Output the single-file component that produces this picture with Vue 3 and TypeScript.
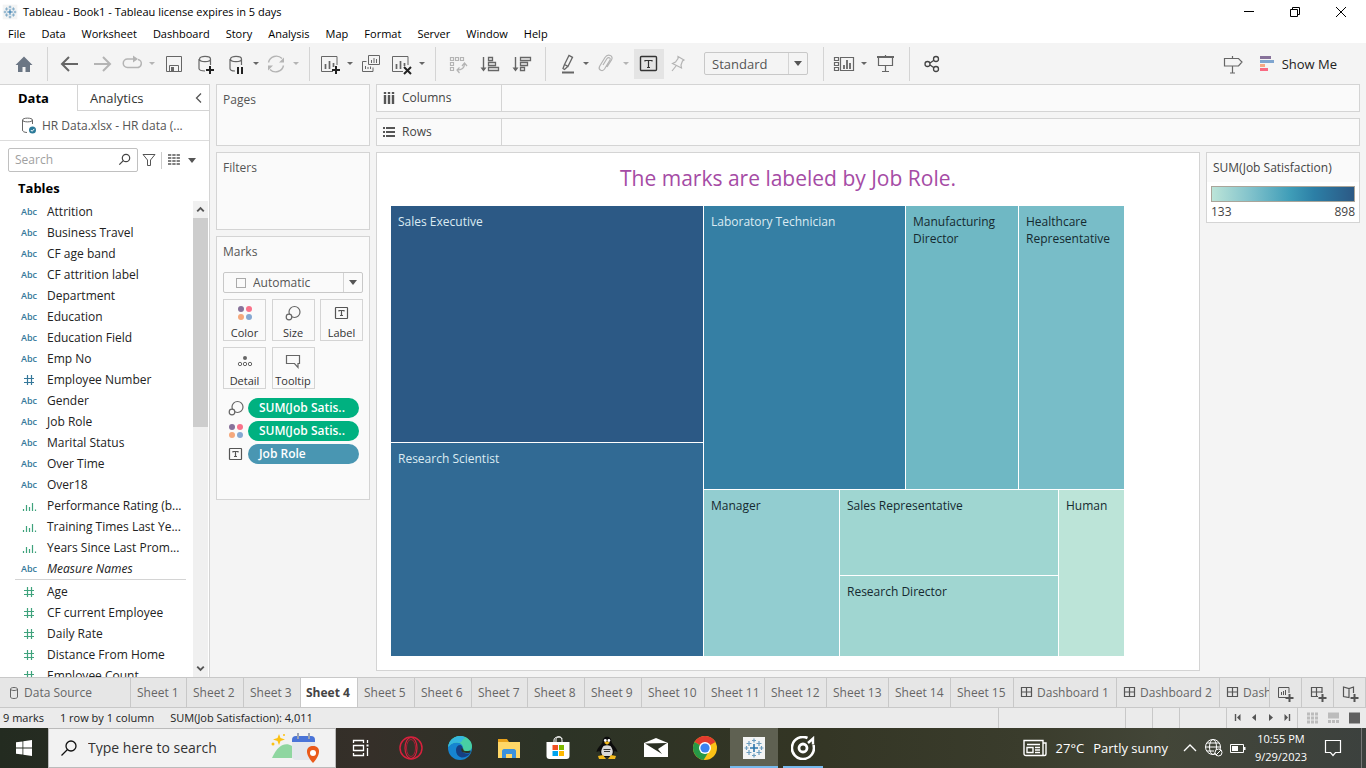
<script setup lang="ts">
import { ref } from 'vue'

type Kind = 'abc' | 'num' | 'bin' | 'measure'
interface Field { name: string; kind: Kind; italic?: boolean }
interface Tool { icon: string; label: string; cls: string }

const icons: Record<string, string> = {
  home: '<path d="M12 4.500 3.500 13H6v7h4.500v-5h3v5H18v-7h2.500z" fill="#6b7684"/>',
  back: '<path d="M20 12H4.500M11 5l-7 7 7 7" stroke="#666" stroke-width="2"/>',
  forward: '<path d="M4 12h15.500M13 5l7 7-7 7" stroke="#b4b4b4" stroke-width="2"/>',
  replay: '<path d="M13 7H7.500a4 4 0 0 0 0 8.500h9a4 4 0 0 0 1.500-8" stroke="#b4b4b4" stroke-width="1.500"/><path d="M13 3.500v7l5-3.500z" fill="#b4b4b4"/>',
  save: '<path d="M4.500 4.500h15v15h-15zM7.500 19v-5.500h9V19" stroke="#666"/><path d="M9 15h3v4H9z" fill="#666"/>',
  dbAdd: '<path d="M16.500 7v6M11 19c-4 0-6-1-6-2.500V7M5.500 7c0-3.500 11-3.500 11 0s-11 3.500-11 0z" stroke="#666" stroke-width="1.200"/><path d="M16 14v8M12 18h8" stroke="#222" stroke-width="2"/>',
  dbPause: '<path d="M17.500 7v6M11 19c-3 0-5-1-5-2.500V7M6.500 7c0-3.500 11-3.500 11 0s-11 3.500-11 0z" stroke="#666" stroke-width="1.200"/><path d="M14 15v7M18 15v7" stroke="#222" stroke-width="2"/>',
  refresh: '<path d="M4.500 10.500a8 8 0 0 1 13.500-4M19.500 13.500a8 8 0 0 1-13.500 4" stroke="#b4b4b4" stroke-width="1.400"/><path d="M20 5.500v5h-5zM4 18.500v-5h5z" fill="#b4b4b4"/>',
  sheetAdd: '<path d="M19 13V4.500H3.500v15H15" stroke="#666"/><path d="M7.500 12v5M11.500 9v8M15.500 11v4" stroke="#666" stroke-width="1.700"/><path d="M18 14v8M14 18h8" stroke="#222" stroke-width="2"/>',
  duplicate: '<path d="M9.500 3.500h11v9h-11z" stroke="#666"/><path d="M7.500 9.500h-4v10h10.500v-4" stroke="#666"/><path d="M12.500 8v3M15 6v5M17.500 7v4M6.500 14v3M9 15v2M11.500 14.500V17" stroke="#666"/>',
  clear: '<path d="M19 13V4.500H3.500v15H14" stroke="#666"/><path d="M7.500 12v5M11.500 9v8M15.500 11v3" stroke="#666" stroke-width="1.700"/><path d="m15 15 7 7m0-7-7 7" stroke="#222" stroke-width="2"/>',
  swap: '<path d="M4.500 5.500h3v3h-3zM9.500 5.500h3v3h-3zM14.500 5.500h3v3h-3zM4.500 10.500h3v3h-3zM4.500 15.500h3v3h-3zM11 18c5 0 7.500-2 7.500-6M16 14l2.500-3 2.500 3M13.500 15.500 11 18l2.500 3" stroke="#b4b4b4" stroke-width="1.200"/>',
  sortAsc: '<path d="M5.500 5v13" stroke="#666" stroke-width="1.400"/><path d="M2.500 15.500h6l-3 4z" fill="#666"/><path d="M10.500 5.500h4v3h-4zM10.500 10.500h7v3h-7zM10.500 15.500h10v3h-10z" stroke="#666" stroke-width="1.300"/>',
  sortDesc: '<path d="M5.500 5v13" stroke="#666" stroke-width="1.400"/><path d="M2.500 15.500h6l-3 4z" fill="#666"/><path d="M10.500 5.500h10v3h-10zM10.500 10.500h7v3h-7zM10.500 15.500h4v3h-4z" stroke="#666" stroke-width="1.300"/>',
  highlight: '<path d="m10.500 12.500 4.500-9 3.500 1.800-4.500 9zM10.500 12.500l-1.500 4 1.500 1 3.500-3.200" stroke="#666" stroke-width="1.300"/><path d="M8 20.500h12" stroke="#666" stroke-width="2"/>',
  clip: '<path d="m9 13 4-6.500c1.500-2 4-.5 3 1.500l-5.500 9c-2 3-6.500 1-5-2.500l5.500-9c3-4.500 9-1.500 6.500 2.500l-4.500 7" stroke="#b4b4b4" stroke-width="1.200"/>',
  label: '<rect x="3.500" y="4.500" width="16" height="14" rx="1" stroke="#333" stroke-width="1.400"/><path d="M8 9.500V8.500h7v1M11.500 8.500v7M10 15.500h3" stroke="#333" stroke-width="1.200"/>',
  pin: '<path d="m12 4.500 6 3.500-1.500 1-1.500 4 .5 3-9-4.500L9.500 10l2.500-3.500zM10 14l-4 5" stroke="#b4b4b4" stroke-width="1.200"/>',
  cards: '<path d="M2.500 5.500h4v3h-4zM2.500 10.500h4v3h-4zM2.500 15.500h4v3h-4zM8.500 5.500h13v13h-13z" stroke="#666" stroke-width="1.200"/><path d="M12 13v4M15 8v9M18 11v6" stroke="#666" stroke-width="1.800"/>',
  present: '<path d="M3 5h17" stroke="#666" stroke-width="2"/><path d="M4.500 5v8.500h14V5M11.500 3v2M11.500 14v5.500M8 19.500h7" stroke="#666" stroke-width="1.200"/>',
  share: '<circle cx="7.500" cy="12" r="2.500"/><circle cx="16" cy="7" r="2.500"/><circle cx="16" cy="17" r="2.500"/><path d="m10 11 4-2.800m-4 4.800 4 2.800"/>',
  guide: '<path d="M3.500 6.500h14l3.500 3.500-3.500 4h-14zM11.500 4v2M11.500 14v7M9 21h5" stroke="#666" stroke-width="1.200"/>',
  showme: '<path d="M2 4h11v3H2z" fill="#87729a"/><path d="M2 8h14v3H2z" fill="#7fa5cf"/><path d="M2 12h5v3H2z" fill="#f5a884"/><path d="M2 16h8v3H2z" fill="#f96a82"/>',
  color: '<circle cx="8" cy="8" r="3" fill="#87729a"/><circle cx="16" cy="8" r="3" fill="#f9728a"/><circle cx="8" cy="16" r="3" fill="#f5a87c"/><circle cx="16" cy="16" r="3" fill="#85a8d2"/>',
  size: '<circle cx="13.500" cy="11" r="5.500" stroke="#666" stroke-width="1.200"/><circle cx="8" cy="16" r="2.800" fill="#fafafa" stroke="#666" stroke-width="1.200"/>',
  text: '<rect x="5.500" y="6.500" width="12" height="11" rx=".5" stroke="#555" stroke-width="1.200"/><path d="M9 10.500V9.500h5v1M11.500 9.500v5M10 14.500h3" stroke="#555" stroke-width="1.200"/>',
  detail: '<circle cx="12" cy="9" r="2" fill="#666"/><circle cx="7" cy="15" r="1.700" stroke="#666"/><circle cx="12" cy="15" r="1.700" stroke="#666"/><circle cx="17" cy="15" r="1.700" stroke="#666"/>',
  tooltip: '<path d="M5.500 6.500h13v8H17v4l-3.500-4h-8z" stroke="#666" stroke-width="1.200"/>',
  db: '<path d="M14.500 6v4M9 18.500c-3-.2-4.500-1-4.500-2.500V6M4.500 6c0-2.500 10-2.500 10 0s-10 2.500-10 0z" stroke="#666"/><circle cx="14.500" cy="16" r="3.500" fill="#2b7a99" stroke="none"/><path d="m12.800 16 1.300 1.300 2.200-2.400" stroke="#fff"/>',
  cyl: '<path d="M8.500 8v8c0 2 7 2 7 0V8c0-2-7-2-7 0s7 2 7 0" stroke="#666"/>',
  search: '<circle cx="13" cy="10" r="3.700" stroke="#444" stroke-width="1.200"/><path d="m10.300 12.700-4 4" stroke="#444" stroke-width="1.200"/>',
  filter: '<path d="M6 6.500h12l-4.500 5.500v5.500h-3V12z" stroke="#555"/>',
  list: '<path d="M6 7h12M6 10h12M6 13h12M6 16h12" stroke="#555" stroke-width="1.400" stroke-dasharray="3.300 1"/>',
  columns: '<path d="M8 6v2M12 6v2M16 6v2M8 9v9M12 9v9M16 9v9" stroke="#555" stroke-width="2.400"/>',
  rows: '<path d="M6 8h2M6 12h2M6 16h2M9 8h9M9 12h9M9 16h9" stroke="#555" stroke-width="2"/>',
  dash: '<path d="M7.500 6.500h10v9h-10zM12.500 6.500v9M7.500 11h10" stroke="#555" stroke-width="1.200"/>',
  newSheet: '<path d="M16 12V6.500H5.500v10H13M8.500 11V14M10.500 10V14M12.500 9V14" stroke="#555"/><path d="M16.500 13v8M12.500 17h8" stroke="#555" stroke-width="2"/>',
  newDash: '<path d="M17 12V6.500H6.500v9H13M11.500 6.500v9M6.500 11H17" stroke="#555" stroke-width="1.200"/><path d="M17.500 13v8M13.500 17h8" stroke="#555" stroke-width="2"/>',
  newStory: '<path d="M16.500 12V6L12 7.500 6.500 6v9.500L12 16.500V7.500" stroke="#555" stroke-width="1.200"/><path d="M17.500 13v8M13.500 17h8" stroke="#555" stroke-width="2"/>',
  first: '<path d="M9.500 8v7" stroke="#555" stroke-width="1.400"/><path d="M14.500 8v7L11 11.500z" fill="#555"/>',
  prev: '<path d="M14 8v7l-4-3.500z" fill="#555"/>',
  next: '<path d="M11 8v7l4-3.500z" fill="#555"/>',
  last: '<path d="M15.500 8v7" stroke="#555" stroke-width="1.400"/><path d="M10.500 8v7l3.500-3.500z" fill="#555"/>',
  gridView: '<path d="M7 8h11M7 12h11M7 16h11" stroke="#bcbcbc" stroke-width="3" stroke-dasharray="3 1"/>',
  filmView: '<path d="M7 6.500h11v6H7z" fill="#bcbcbc"/><path d="M7 15.500h11" stroke="#bcbcbc" stroke-width="3" stroke-dasharray="3 1"/>',
  sheetView: '<path d="M7 6.500h11v11H7z" fill="#606060"/>',
}

const appIcons: Record<string, string> = {
  taskview: '<path d="M5.500 7V4.500h10V7M5.500 17v2.500h10V17M5.500 9.500h10v5h-10zM19.500 4v3M19.500 12v8" stroke="#fff" stroke-width="1.300"/><path d="M18.500 8.500h2v2h-2z" fill="#fff"/>',
  opera: '<circle cx="12" cy="12" r="11" stroke="#d8213d" stroke-width="1.500"/><ellipse cx="12" cy="12" rx="6" ry="10.500" stroke="#d8213d" stroke-width="1.200"/><ellipse cx="12" cy="12" rx="4.500" ry="8.500" stroke="#a81f35"/>',
  edge: '<circle cx="12" cy="12" r="12" fill="#1684d0"/><path d="M.5 9C2.500 2 8 0 12 0c7 0 12 5 12 10 0 4-3 6.500-6.500 6.500-3 0-4-1.500-3-3C16 9.500 12.500 6.500 9 6.500 5 6.500 2 8 .5 11z" fill="#48cfa3"/><path d="M.5 9C2.500 3.500 7 .5 12 0c3-.1 4.500 1 5.500 2C13 3 15 8 9 6.500 5 6.500 2 8 .5 11z" fill="#35b6df"/><path d="M8 14c0-3 1.500-5 4.500-5 2 1 3 3 1.500 5 0 3 4 4.500 8.500 3-3 4-7 5-9 4.500C10 20.500 8 18 8 14z" fill="#153f83"/><path d="M14.500 12.500c-1 3 2 4.500 8 3" stroke="#2c3326" stroke-width="2"/>',
  explorer: '<path d="M1 3h9l2 3h11v16H1z" fill="#e9a21b"/><path d="M1 6h22v16H1z" fill="#ffd767"/><path d="M5 22v-7c0-1 1-2 2-2h10c1 0 2 1 2 2v7h-4v-4H9v4z" fill="#3b91dc"/>',
  store: '<path d="M8 6V4c0-4 8-4 8 0v2M10 6V3c0-3 6-3 6 0" stroke="#fff"/><path d="M.500 6h23v14q0 3-3 3h-17q-3 0-3-3z" fill="#fff"/><path d="M6.500 9H12v5H6.500z" fill="#f25022"/><path d="M13 9h5v5h-5z" fill="#7fba00"/><path d="M6.500 15H12v5H6.500z" fill="#00a4ef"/><path d="M13 15h5v5h-5z" fill="#ffb900"/>',
  penguin: '<path d="M7.500 6c0-7 9-7 9 0 1 3 5 5 6 10l-3-1-2 6h-11l-2-6-3 1C2.500 11 6.500 9 7.500 6z" fill="#0c0c0c"/><path d="M8.500 10c2-1 5-1 7 0 3 4 3 8 0 10h-7c-3-2-3-6 0-10z" fill="#d8d8d8"/><circle cx="10.300" cy="4.500" r="1.400" fill="#fff"/><circle cx="13.900" cy="4.500" r="1.400" fill="#fff"/><path d="m9 6.800 3-1.500 3 1.500-3 2zM3 20l5-1 3 4H4zM21 20l-5-1-3 4h7z" fill="#f2b91d"/><path d="M8.500 13.500h7M9 15.500h6" stroke="#333"/>',
  mail: '<path d="M0 7 12 2l12 5v14H0z" fill="#fff"/><path d="m1 7.500 22-.5L14 13l4 5z" fill="#2b3024"/>',
  chrome: '<circle cx="12" cy="12" r="12" fill="#fbc116"/><path d="M12 12 1.600 6A12 12 0 0 1 22.400 6z" fill="#e33b2e"/><path d="M12 12 1.600 6a12 12 0 0 0 9 17.900l4.900-8z" fill="#279847"/><circle cx="12" cy="12" r="6" fill="#fff"/><circle cx="12" cy="12" r="4.600" fill="#3b82f0"/>',
  tableau: '<path d="M1 1h22v22H1z" fill="#f3f4f4"/><path d="M12 8v8M8 12h8" stroke="#2c76ac" stroke-width="1.600"/><path d="M12 2.500v4M10 4.500h4M12 17.500v4M10 19.500h4M2.500 12h4M4.500 10v4M17.500 12h4M19.500 10v4M7 5v5M4.500 7.500h5M17 5v5M14.500 7.500h5M7 14v5M4.500 16.500h5M17 14v5M14.500 16.500h5" stroke="#6b9dbf" stroke-width="1.200"/>',
  groove: '<path d="M16.500 2A11 11 0 1 0 22.500 9" stroke="#fff" stroke-width="2.600"/><path d="m17 7 5-4.500v6" stroke="#fff" stroke-width="2.400"/><circle cx="12" cy="12" r="4" stroke="#fff" stroke-width="2.800"/>',
  news: '<path d="M1 4.500h19v15H3q-2 0-2-2zM20 7h3v11q0 1.500-1.500 1.500H20M4 8.500h13M4 11.500h6v5H4zM12 11.500h5M12 14h5M12 16.500h5" stroke="#fff" stroke-width="1.400"/>',
  globe: '<circle cx="11" cy="11" r="7.500" stroke="#fff"/><ellipse cx="11" cy="11" rx="3.500" ry="7.500" stroke="#fff"/><path d="M3.500 11h15M5 7h12M5 15h7" stroke="#fff"/><circle cx="16.500" cy="16.500" r="3.500" fill="#3c4136" stroke="#fff"/><path d="m14 19 5-5" stroke="#fff"/>',
  battery: '<path d="M4.500 8.500h13v8h-13z" stroke="#fff"/><path d="M6 10h6v5H6zM18 11h1.500v3H18z" fill="#fff"/>',
  chevron: '<path d="m6 15 6-6 6 6" stroke="#fff" stroke-width="1.300"/>',
  notify: '<path d="M4.500 4.500h15v12h-5l-2.500 3-2.500-3h-5z" stroke="#fff" stroke-width="1.200"/>',
}

const menus = ['File', 'Data', 'Worksheet', 'Dashboard', 'Story', 'Analysis', 'Map', 'Format', 'Server', 'Window', 'Help']

const caret = (label: string, dim = false): Tool => ({ icon: '', label, cls: dim ? 'caret dim' : 'caret' })
const groups: Tool[][] = [
  [
    { icon: 'back', label: 'Undo', cls: 'wide' },
    { icon: 'forward', label: 'Redo', cls: 'wide' },
    { icon: 'replay', label: 'Replay animation', cls: 'slim' }, caret('Replay options', true),
    { icon: 'save', label: 'Save', cls: 'wide' },
    { icon: 'dbAdd', label: 'New data source', cls: 'wide' },
    { icon: 'dbPause', label: 'Pause auto updates', cls: 'slim' }, caret('Update options'),
    { icon: 'refresh', label: 'Run update', cls: 'slim' }, caret('Run options', true),
  ],
  [
    { icon: 'sheetAdd', label: 'New worksheet', cls: 'slim' }, caret('New options'),
    { icon: 'duplicate', label: 'Duplicate', cls: '' },
    { icon: 'clear', label: 'Clear sheet', cls: '' }, caret('Clear options'),
  ],
  [
    { icon: 'swap', label: 'Swap rows and columns', cls: 'wide' },
    { icon: 'sortAsc', label: 'Sort ascending', cls: 'wide' },
    { icon: 'sortDesc', label: 'Sort descending', cls: 'wide' },
  ],
  [
    { icon: 'highlight', label: 'Highlight', cls: 'slim' }, caret('Highlight options'),
    { icon: 'clip', label: 'Group members', cls: 'slim' }, caret('Group options', true),
    { icon: 'label', label: 'Show mark labels', cls: 'on' },
    { icon: 'pin', label: 'Fix axes', cls: 'slim' },
  ],
]

const dimensions: Field[] = [
  ...['Attrition', 'Business Travel', 'CF age band', 'CF attrition label', 'Department', 'Education', 'Education Field', 'Emp No'].map((name): Field => ({ name, kind: 'abc' })),
  { name: 'Employee Number', kind: 'num' },
  ...['Gender', 'Job Role', 'Marital Status', 'Over Time', 'Over18'].map((name): Field => ({ name, kind: 'abc' })),
  { name: 'Performance Rating (b...', kind: 'bin' },
  { name: 'Training Times Last Ye...', kind: 'bin' },
  { name: 'Years Since Last Prom...', kind: 'bin' },
  { name: 'Measure Names', kind: 'abc', italic: true },
]
const measures: Field[] = ['Age', 'CF current Employee', 'Daily Rate', 'Distance From Home', 'Employee Count'].map((name) => ({ name, kind: 'measure' }))

const markButtons = [
  { icon: 'color', name: 'Color' },
  { icon: 'size', name: 'Size' },
  { icon: 'text', name: 'Label' },
  { icon: 'detail', name: 'Detail' },
  { icon: 'tooltip', name: 'Tooltip' },
]
const pills = [
  { icon: 'size', name: 'SUM(Job Satis..', tone: 'green' },
  { icon: 'color', name: 'SUM(Job Satis..', tone: 'green' },
  { icon: 'text', name: 'Job Role', tone: 'blue' },
]

const sheetWidths = ['narrow', '', '', '', '', '', 'narrow', '', '', 'longest', 'mid', 'long', 'long', 'long', 'longest']
const sheets = sheetWidths.map((cls, i) => ({ name: `Sheet ${i + 1}`, cls }))
const dashboards = ['Dashboard 1', 'Dashboard 2', 'Dash']
const active = ref('Sheet 4')

const apps = ['taskview', 'opera', 'edge', 'explorer', 'store', 'penguin', 'mail', 'chrome', 'tableau', 'groove']
const query = ref('')
const fit = ref('Standard')
const markType = ref('Automatic')
</script>

<template>
  <div class="app">
    <header class="titlebar">
      <svg class="logo" viewBox="0 0 24 24" fill="none" v-html="appIcons.tableau"></svg>
      <span class="title">Tableau - Book1 - Tableau license expires in 5 days</span>
      <button class="win" aria-label="Minimize"><svg viewBox="0 0 12 12"><path d="M1 5.500h10" /></svg></button>
      <button class="win" aria-label="Restore"><svg viewBox="0 0 12 12"><path d="M1.500 3.500h7v7h-7zM3.500 3V1.500h7v7H9" /></svg></button>
      <button class="win" aria-label="Close"><svg viewBox="0 0 12 12"><path d="m1 1 10 10M11 1 1 11" /></svg></button>
    </header>
    <nav class="menubar">
      <button v-for="m in menus" :key="m">{{ m }}</button>
    </nav>

    <div class="toolbar" role="toolbar" aria-label="Main">
      <button class="tool home" aria-label="Home"><svg viewBox="0 0 24 24" fill="none" v-html="icons.home"></svg></button>
      <template v-for="(g, gi) in groups" :key="gi">
        <i class="sep"></i>
        <button v-for="t in g" :key="t.label" class="tool" :class="t.cls" :aria-label="t.label">
          <svg v-if="t.icon" viewBox="0 0 24 24" fill="none" v-html="icons[t.icon]"></svg>
        </button>
      </template>
      <div class="combo fit">
        <select v-model="fit" aria-label="Fit"><option>Standard</option><option>Entire View</option></select>
        <span class="arrow"></span>
      </div>
      <i class="sep"></i>
      <button class="tool slim" aria-label="Show or hide cards"><svg viewBox="0 0 24 24" fill="none" v-html="icons.cards"></svg></button>
      <button class="tool caret" aria-label="Card options"></button>
      <button class="tool wide" aria-label="Presentation mode"><svg viewBox="0 0 24 24" fill="none" v-html="icons.present"></svg></button>
      <i class="sep"></i>
      <button class="tool wide" aria-label="Share"><svg viewBox="0 0 24 24" fill="none" stroke="#444" stroke-width="1.3" v-html="icons.share"></svg></button>
      <span class="spacer"></span>
      <button class="tool wide" aria-label="Guide"><svg viewBox="0 0 24 24" fill="none" v-html="icons.guide"></svg></button>
      <button class="showme"><svg viewBox="0 0 24 24" fill="none" v-html="icons.showme"></svg>Show Me</button>
    </div>

    <main class="work">
      <aside class="data">
        <div class="tabs">
          <button class="on">Data</button>
          <button class="off">Analytics<svg viewBox="0 0 8 12" fill="none"><path d="M6 1.500 1.500 6 6 10.500" stroke="#555" stroke-width="1.300" /></svg></button>
        </div>
        <div class="source"><svg viewBox="0 0 24 24" fill="none" v-html="icons.db"></svg>HR Data.xlsx - HR data (...</div>
        <div class="find">
          <label class="box">
            <input v-model="query" type="text" placeholder="Search" aria-label="Search fields" />
            <svg viewBox="0 0 24 24" fill="none" v-html="icons.search"></svg>
          </label>
          <button aria-label="Filter fields"><svg viewBox="0 0 24 24" fill="none" v-html="icons.filter"></svg></button>
          <i></i>
          <button aria-label="View as list"><svg viewBox="0 0 24 24" fill="none" v-html="icons.list"></svg></button>
          <span class="arrow"></span>
        </div>
        <h2>Tables</h2>
        <div class="fields">
          <div class="scroll">
            <ul v-for="(set, si) in [dimensions, measures]" :key="si">
              <li v-for="f in set" :key="f.name">
                <b v-if="f.kind === 'abc'" class="abc">Abc</b>
                <svg v-else-if="f.kind === 'bin'" class="glyph green" viewBox="0 0 16 12"><path d="M2.500 9v2M5.500 5v6M8.500 7v4M11.500 3v8M14.500 9.500V11" /></svg>
                <svg v-else class="glyph" :class="{ green: f.kind === 'measure' }" viewBox="0 0 16 12"><path d="M6.500 1v10M10.500 1v10M3 4.500h10M3 8.500h10" /></svg>
                <em v-if="f.italic">{{ f.name }}</em>
                <span v-else>{{ f.name }}</span>
              </li>
            </ul>
          </div>
          <div class="bar">
            <svg viewBox="0 0 16 16"><path d="m4.500 10 3.500-3.500 3.500 3.500" /></svg>
            <span class="thumb"></span>
            <svg viewBox="0 0 16 16"><path d="m4.500 6 3.500 3.500L11.500 6" /></svg>
          </div>
        </div>
      </aside>

      <section class="cards">
        <div class="card pages">Pages</div>
        <div class="card filters">Filters</div>
        <div class="card marks">
          Marks
          <div class="combo type">
            <i class="square"></i>
            <select v-model="markType" aria-label="Mark type"><option>Automatic</option><option>Square</option></select>
            <span class="arrow"></span>
          </div>
          <div class="grid">
            <button v-for="b in markButtons" :key="b.name"><svg viewBox="0 0 24 24" fill="none" v-html="icons[b.icon]"></svg>{{ b.name }}</button>
          </div>
          <div v-for="(p, i) in pills" :key="i" class="pillrow">
            <svg viewBox="0 0 24 24" fill="none" v-html="icons[p.icon]"></svg>
            <button class="pill" :class="p.tone">{{ p.name }}</button>
          </div>
        </div>
      </section>

      <section class="canvas">
        <div class="shelf"><div><svg viewBox="0 0 24 24" fill="none" v-html="icons.columns"></svg>Columns</div></div>
        <div class="shelf"><div><svg viewBox="0 0 24 24" fill="none" v-html="icons.rows"></svg>Rows</div></div>
        <div class="viewrow">
          <article class="view">
            <h1>The marks are labeled by Job Role.</h1>
            <div class="treemap">
              <div class="left">
                <div class="mark light c1">Sales Executive</div>
                <div class="mark light c2">Research Scientist</div>
              </div>
              <div class="right">
                <div class="upper">
                  <div class="mark light c3">Laboratory Technician</div>
                  <div class="mark c4">Manufacturing Director</div>
                  <div class="mark c5">Healthcare Representative</div>
                </div>
                <div class="lower">
                  <div class="mark c6">Manager</div>
                  <div class="pair">
                    <div class="mark c7">Sales Representative</div>
                    <div class="mark c8">Research Director</div>
                  </div>
                  <div class="mark c9">Human</div>
                </div>
              </div>
            </div>
          </article>
          <div class="legend">
            <p>SUM(Job Satisfaction)</p>
            <div class="ramp"></div>
            <div class="ends"><span>133</span><span>898</span></div>
          </div>
        </div>
      </section>
    </main>

    <nav class="sheets">
      <button class="tab ds"><svg viewBox="0 0 24 24" fill="none" v-html="icons.cyl"></svg>Data Source</button>
      <button v-for="s in sheets" :key="s.name" class="tab" :class="[s.cls, { active: s.name === active }]" @click="active = s.name">{{ s.name }}</button>
      <button v-for="(d, i) in dashboards" :key="d" class="tab dashtab" :class="{ cut: i === 2 }"><svg viewBox="0 0 24 24" fill="none" v-html="icons.dash"></svg>{{ d }}</button>
      <button v-for="n in ['newSheet', 'newDash', 'newStory']" :key="n" class="tab add" :aria-label="n"><svg viewBox="0 0 24 24" fill="none" v-html="icons[n]"></svg></button>
    </nav>

    <footer class="status">
      <span>9 marks</span><span>1 row by 1 column</span><span>SUM(Job Satisfaction): 4,011</span>
      <span class="spacer"></span>
      <i class="cell"></i><i class="cell"></i><i class="cell"></i><i class="cell last"></i>
      <div class="pager"><button v-for="n in ['first', 'prev', 'next', 'last']" :key="n" :aria-label="n"><svg viewBox="0 0 24 24" fill="none" v-html="icons[n]"></svg></button></div>
      <div class="views"><button v-for="n in ['gridView', 'filmView', 'sheetView']" :key="n" :aria-label="n"><svg viewBox="0 0 24 24" fill="none" v-html="icons[n]"></svg></button></div>
    </footer>

    <div class="taskbar">
      <button class="start" aria-label="Start"><svg viewBox="0 0 16 16"><path d="M0 2.300 6.500 1.400v6.200H0zM7.300 1.300 16 0v7.600H7.300zM0 8.400h6.500v6.200L0 13.700zM7.300 8.400H16V16l-8.700-1.300z" fill="#fff" /></svg></button>
      <label class="wsearch">
        <svg class="glass" viewBox="0 0 18 18" fill="none"><circle cx="11" cy="7" r="5" stroke="#111" stroke-width="1.300" /><path d="m7.500 10.500-6 6" stroke="#111" stroke-width="1.300" /></svg>
        <input type="text" placeholder="Type here to search" aria-label="Type here to search" />
        <svg class="scene" viewBox="0 0 52 32" fill="none">
          <path d="M2 26C8 12 16 10 22 14v12z" fill="#8fd6a0" />
          <rect x="22" y="4" width="23" height="24" rx="4" fill="#e4e7ec" />
          <path d="M22 10V8q0-4 4-4h15q4 0 4 4v2z" fill="#4a74d8" />
          <path d="M28 1v6M39 1v6" stroke="#9aa3b5" stroke-width="2" />
          <path d="m9 2 1.500 4L15 7.500 10.500 9 9 13 7.500 9 3 7.500 7.500 6z" fill="#fcc112" /><circle cx="3" cy="12" r="1.500" fill="#fcc112" /><circle cx="14" cy="3" r="1" fill="#fcc112" />
          <path d="M43 31c-9-10-7-17 0-17s9 7 0 17z" fill="#ea5a1a" /><circle cx="43" cy="21" r="3" fill="#fff" />
        </svg>
      </label>
      <button v-for="a in apps" :key="a" class="app-btn" :class="a" :aria-label="a"><svg viewBox="0 0 24 24" fill="none" v-html="appIcons[a]"></svg></button>
      <span class="spacer"></span>
      <button class="weather"><svg viewBox="0 0 24 24" fill="none" v-html="appIcons.news"></svg><span>27°C</span><span>Partly sunny</span></button>
      <button v-for="n in ['chevron', 'globe', 'battery']" :key="n" class="tray" :aria-label="n"><svg viewBox="0 0 24 24" fill="none" v-html="appIcons[n]"></svg></button>
      <div class="clock"><span>10:55 PM</span><span>9/29/2023</span></div>
      <button class="notify" aria-label="Notifications"><svg viewBox="0 0 24 24" fill="none" v-html="appIcons.notify"></svg></button>
      <i class="edge-line"></i>
    </div>
  </div>
</template>

<style>
body { margin: 0; overflow: hidden; }
</style>

<style scoped>
* { box-sizing: border-box; }
.app { height: 100vh; display: flex; flex-direction: column; background: #f4f4f4; color: #333; font: 13px/16px "Open Sans", "Noto Sans", sans-serif; overflow: hidden; }
button { font: inherit; color: inherit; background: none; border: 0; padding: 0; margin: 0; white-space: nowrap; }
svg { width: 24px; height: 24px; flex: none; display: block; }
.spacer { flex: 1; }
.arrow { width: 0; height: 0; border: 4px solid transparent; border-top: 5px solid #555; border-bottom: 0; flex: none; }

.titlebar { height: 24px; background: #fff; display: flex; align-items: center; color: #000; font-size: 11px; flex: none; padding: 0 2px; }
.logo { width: 16px; height: 16px; margin-right: 5px; }
.title { flex: 1; }
.win { width: 46px; height: 22px; display: flex; justify-content: center; align-items: center; }
.win svg { width: 12px; height: 12px; fill: none; stroke: #000; }
.menubar { height: 19px; background: #fff; display: flex; gap: 16px; padding: 0 8px; color: #000; font-size: 11px; flex: none; line-height: 20px; }

.toolbar { height: 41px; flex: none; display: flex; align-items: center; padding-right: 29px; }
.tool { width: 30px; height: 30px; display: flex; align-items: center; justify-content: center; flex: none; }
.tool.home { width: 47px; }
.tool.home + .sep { margin-left: 0; }
.tool.slim { width: 28px; }
.tool.wide { width: 32px; }
.tool.on { background: #e4e4e4; margin-left: 2px; }
.tool.caret { width: 12px; }
.tool.caret::after { content: ""; border: 3px solid transparent; border-top: 3px solid #666; border-bottom: 0; }
.tool.dim::after { border-top-color: #b4b4b4; }
.sep { width: 1px; height: 34px; background: #d4d4d4; margin: 0 6px 0 7px; flex: none; }
.combo { display: flex; align-items: center; border: 1px solid #c8c8c8; border-radius: 2px; }
.combo select { appearance: none; border: 0; border-right: 1px solid #d4d4d4; background: none; font: inherit; color: #555; flex: 1; min-width: 0; height: 100%; padding: 0 0 0 7px; outline: 0; }
.combo .arrow { margin: 0 5px; }
.fit { width: 104px; height: 23px; margin: 0 8px 0 12px; }
.showme { display: flex; align-items: center; gap: 0; margin-left: 9px; color: #222; }

.work { flex: 1; min-height: 0; display: flex; gap: 6px; padding-right: 6px; }
.data { width: 210px; flex: none; background: #fff; border: 1px solid #d4d4d4; border-width: 1px 1px 0 0; display: flex; flex-direction: column; }
.tabs { display: flex; height: 26px; flex: none; }
.tabs .on { width: 77px; text-align: left; padding-left: 18px; font-weight: 700; color: #000; }
.tabs .off { flex: 1; border: 1px solid #d4d4d4; border-width: 0 0 1px 1px; display: flex; justify-content: space-between; align-items: center; padding: 0 6px 0 12px; color: #333; }
.tabs svg { width: 8px; height: 12px; }
.source { height: 30px; flex: none; border-bottom: 1px solid #dcdcdc; display: flex; align-items: center; padding-left: 18px; color: #555; font-size: 12px; }
.find { display: flex; align-items: center; padding: 7px 8px 0; flex: none; }
.box { display: flex; align-items: center; width: 130px; height: 24px; border: 1px solid #c0c0c0; border-radius: 2px; margin-right: -1px; background: #fff; }
.box input { flex: 1; min-width: 0; border: 0; outline: 0; padding: 0 0 0 6px; font: inherit; font-size: 12px; background: none; }
.box input::placeholder { color: #a0a0a0; opacity: 1; }
.find i { width: 1px; height: 17px; background: #ccc; }
.find .arrow { margin-left: 2px; }
h2 { margin: 8px 0 5px 18px; font-size: 13px; line-height: 16px; color: #000; }
.fields { flex: 1; min-height: 0; display: flex; }
.scroll { flex: 1; min-width: 0; overflow: hidden; }
ul { list-style: none; margin: 0 7px 0 15px; padding: 0; }
ul + ul { border-top: 1px solid #d4d4d4; padding-top: 1px; }
li { display: flex; align-items: center; height: 21px; white-space: nowrap; font-size: 12px; color: #222; }
.abc { width: 32px; padding-left: 6px; font-size: 9px; font-weight: 600; color: #35789a; flex: none; }
.glyph { width: 16px; height: 12px; margin: 0 10px 0 6px; stroke: #35789a; fill: none; stroke-width: 1.200; }
.glyph.green { stroke: #3fa27c; }
.bar { width: 15px; background: #f0f0f0; flex: none; display: flex; flex-direction: column; margin-right: 1px; }
.bar svg { width: 15px; height: 17px; fill: none; stroke: #555; stroke-width: 2; }
.thumb { background: #cdcdcd; flex: none; height: 44%; }
.bar svg:last-child { margin-top: auto; }

.cards { width: 154px; flex: none; display: flex; flex-direction: column; gap: 6px; font-size: 12px; color: #555; }
.card { background: #fafafa; border: 1px solid #d4d4d4; padding: 7px 6px; }
.pages { height: 62px; }
.filters { height: 78px; }
.marks { height: 264px; }
.type { height: 21px; margin: 12px 0 6px; }
.type select { padding-left: 7px; }
.square { width: 10px; height: 10px; border: 1px solid #aaa; margin-left: 12px; }
.grid { display: grid; grid-template-columns: repeat(3, 43px); justify-content: space-between; row-gap: 6px; margin-bottom: 9px; }
.grid button { height: 42px; border: 1px solid #d4d4d4; display: flex; flex-direction: column; align-items: center; color: #333; padding-top: 1px; font-size: 11px; }
.pillrow { display: flex; align-items: center; height: 20px; margin-bottom: 3px; padding: 0 4px 0 1px; }
.pill { flex: 1; height: 20px; border-radius: 10px; color: #fff; text-align: left; padding-left: 11px; font-weight: 600; }
.green.pill { background: #00b180; }
.blue.pill { background: #4996b2; }

.canvas { flex: 1; min-width: 0; display: flex; flex-direction: column; gap: 6px; padding-bottom: 6px; }
.shelf { height: 28px; flex: none; border: 1px solid #d4d4d4; background: #fafafa; display: flex; font-size: 12px; color: #444; }
.shelf div { width: 125px; border-right: 1px solid #d4d4d4; display: flex; align-items: center; gap: 1px; }
.viewrow { flex: 1; min-height: 0; display: flex; align-items: flex-start; gap: 6px; }
.view { flex: 1; min-width: 0; height: 100%; background: #fff; border: 1px solid #d4d4d4; display: flex; flex-direction: column; padding: 9px 75px 14px 14px; }
h1 { margin: 0 -61px 12px 0; text-align: center; font-weight: 400; font-size: 21px; line-height: 32px; color: #a54ba5; }
.treemap { flex: 1; min-height: 0; display: grid; grid-template-columns: 312fr 420fr; gap: 1px; }
.left { display: grid; grid-template-rows: 236fr 213fr; gap: 1px; }
.right { display: grid; grid-template-rows: 283fr 166fr; gap: 1px; min-width: 0; }
.upper { display: grid; grid-template-columns: 201fr 112fr 105fr; gap: 1px; }
.lower { display: grid; grid-template-columns: 135fr 218fr 65fr; gap: 1px; }
.pair { display: grid; grid-template-rows: 85fr 80fr; gap: 1px; }
.mark { padding: 7px 0 0 7px; font-size: 12px; line-height: 17px; color: #152a30; min-width: 0; overflow: hidden; }
.mark.light { color: #dcebf2; }
.c1 { background: #2c5985; }
.c2 { background: #316a94; }
.c3 { background: #357fa4; }
.c4 { background: #6fb8c4; }
.c5 { background: #78bdc8; }
.c6 { background: #92cdd0; }
.c7 { background: #9fd6d1; }
.c8 { background: #a0d6d1; }
.c9 { background: #bce4d8; }
.legend { width: 154px; flex: none; border: 1px solid #d4d4d4; background: #fff; font-size: 12px; color: #444; padding-bottom: 2px; }
.legend p { margin: 0; height: 29px; padding: 7px 6px 0; background: #fafafa; }
.ramp { height: 16px; margin: 4px 4px 2px; border: 1px solid #aaa59a; background: linear-gradient(90deg, #bce4d8, #7fc1cb 28%, #3f9db8 55%, #2c7fa6 72%, #2c5985); }
.ends { display: flex; justify-content: space-between; padding: 0 4px; }

.sheets { height: 31px; flex: none; display: flex; border: 1px solid #c8c8c8; border-width: 1px 0; background: #e6e6e6; font-size: 12px; color: #666; }
.tab { width: 57px; flex: none; border-right: 1px solid #c8c8c8; display: flex; align-items: center; padding-left: 6px; overflow: hidden; }
.tab.narrow { width: 56px; }
.tab.mid { width: 60px; }
.tab.long { width: 62px; }
.tab.longest { width: 63px; }
.tab.active { background: #fff; font-weight: 700; color: #444; padding-left: 5px; }
.tab.ds { width: 131px; padding-left: 2px; }
.tab.ds svg { margin-right: -2px; }
.tab.dashtab { width: 103px; padding-left: 0; }
.tab.dashtab svg { margin-right: -1px; }
.tab.cut { flex: 1; min-width: 0; }
.tab.add { width: 32px; padding-left: 3px; }

.status { height: 20px; flex: none; display: flex; align-items: center; background: #ebebeb; font-size: 11px; color: #222; padding-left: 3px; }
.status > span:not(.spacer) { margin-right: 16px; }
.cell { width: 27px; height: 20px; border-left: 1px solid #c8c8c8; }
.cell:first-of-type { width: 127px; }
.cell.last { width: 47px; }
.pager { display: flex; height: 20px; align-items: center; border: 1px solid #c8c8c8; border-width: 0 1px; width: 72px; justify-content: center; }
.pager button { width: 16px; display: flex; justify-content: center; }
.views { display: flex; padding: 0 2px 0 3px; }
.views button { width: 21px; display: flex; justify-content: center; }

.taskbar { height: 40px; flex: none; display: flex; align-items: stretch; color: #fff; font-size: 13px; background: linear-gradient(90deg, #232b20, #352f29 27%, #2c3326 40%, #333524 58%, #3a3c2c 75%, #434638 85%, #3c413e); }
.start { width: 48px; display: flex; align-items: center; justify-content: center; }
.start svg { width: 16px; height: 16px; }
.wsearch { width: 288px; background: #f2f2f2; border: 1px solid #bbb; display: flex; align-items: center; padding-left: 11px; }
.glass { width: 18px; height: 18px; margin-right: 10px; }
.wsearch input { border: 0; outline: 0; background: none; font: inherit; font-size: 14px; flex: 1; min-width: 0; padding: 0; }
.wsearch input::placeholder { color: #333; opacity: 1; }
.scene { width: 52px; height: 32px; margin-right: 13px; }
.app-btn { width: 48px; margin-right: 1px; display: flex; align-items: center; justify-content: center; border-bottom: 2px solid transparent; border-top: 2px solid transparent; }
.app-btn.taskview { margin-right: 3px; }
.app-btn.tableau { background: #5f6152; border-bottom-color: #76b9ed; }
.app-btn.groove { border-bottom-color: #76b9ed; width: 40px; margin-left: 4px; }
.weather { display: flex; align-items: center; gap: 9px; margin-right: 10px; }
.tray { width: 24px; display: flex; align-items: center; justify-content: center; }
.clock { width: 62px; display: flex; flex-direction: column; align-items: center; justify-content: center; font-size: 11px; line-height: 18px; }
.notify { width: 41px; display: flex; align-items: center; justify-content: center; }
.edge-line { width: 1px; background: #777; margin: 0 4px 0 8px; }
</style>
